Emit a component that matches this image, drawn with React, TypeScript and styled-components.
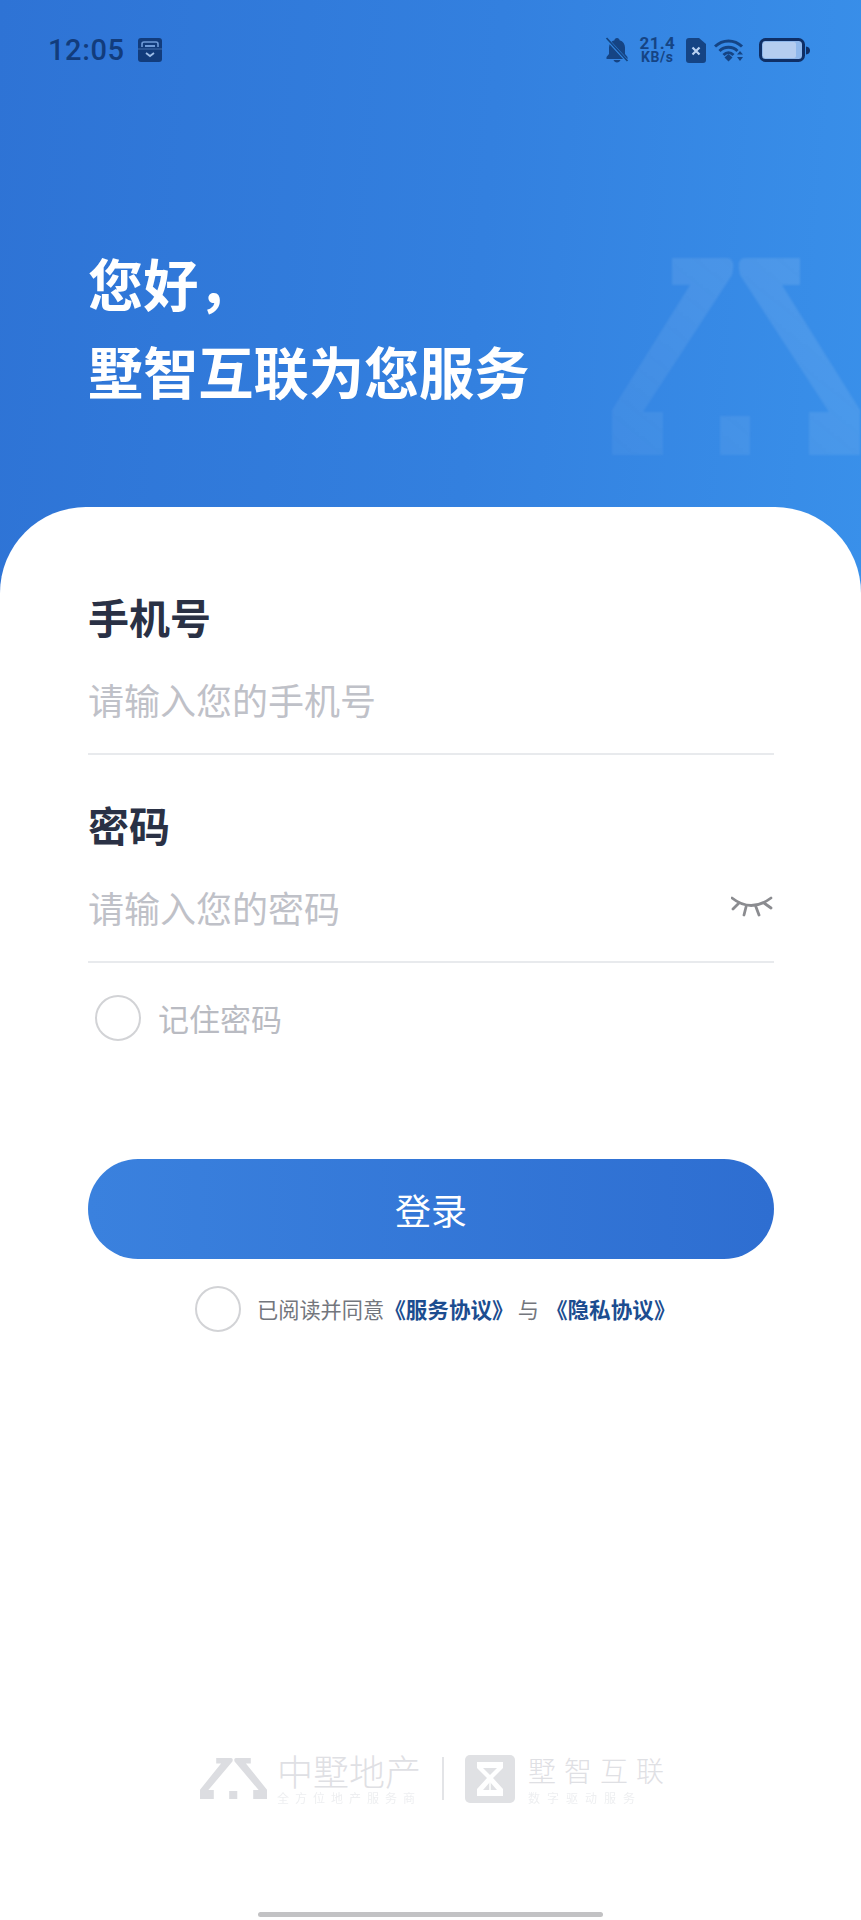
import { FC } from "react";
import styled, { createGlobalStyle } from "styled-components";

const CJK = `"Noto Sans CJK SC", "Noto Sans", sans-serif`;

const GlobalStyle = createGlobalStyle`
    html, body {
        margin: 0;
        padding: 0;
        background: #fff;
    }
    * {
        box-sizing: border-box;
    }
`;

const Page = styled.div`
    display: flex;
    flex-direction: column;
    width: 861px;
    height: 1920px;
    overflow: hidden;
    font-family: ${CJK};
    background: linear-gradient(95deg, #2e73d5 0%, #3380df 55%, #3990ea 100%) no-repeat;
    background-size: 861px 620px;
`;

const Hero = styled.header`
    position: relative;
    flex: none;
    height: 507px;
`;

const StatusBar = styled.div`
    display: flex;
    align-items: center;
    justify-content: space-between;
    height: 100px;
    padding: 0 51px 0 48px;
    color: #123c7c;
`;

const StatusGroup = styled.div`
    display: flex;
    align-items: center;
    gap: ${({ $gap }: { $gap: number }) => $gap}px;
`;

const WifiSlot = styled.span`
    display: flex;
    margin: 0 4px 0 -3px;
`;

const Clock = styled.span`
    font-family: Roboto, sans-serif;
    font-size: 29px;
    font-weight: 500;
    letter-spacing: 0.6px;
`;

const NetSpeed = styled.div`
    display: flex;
    flex-direction: column;
    align-items: center;
    font-family: Roboto, sans-serif;
    font-weight: 700;
    color: #154484;
`;

const NetValue = styled.span`
    font-size: 17px;
    line-height: 14px;
    letter-spacing: 0.3px;
`;

const NetUnit = styled.span`
    font-size: 14px;
    line-height: 14px;
    letter-spacing: 0.6px;
`;

const Greeting = styled.h1`
    margin: 0;
    padding: 138px 0 0 88px;
    font-size: 55.2px;
    font-weight: 700;
    line-height: 88px;
    color: #fff;
`;

const Watermark = styled.svg`
    position: absolute;
    left: 612px;
    top: 258px;
    filter: blur(0.8px);
`;

const Card = styled.main`
    display: flex;
    flex: 1;
    flex-direction: column;
    padding: 85px 87px 0 88px;
    background: #fff;
    border-radius: 86px 86px 0 0;
`;

const Field = styled.div`
    & + & {
        margin-top: 45px;
    }
`;

const FieldLabel = styled.label`
    display: block;
    font-size: 41px;
    font-weight: 700;
    line-height: 48px;
    color: #2a3145;
`;

const FieldRow = styled.div`
    display: flex;
    align-items: center;
    justify-content: space-between;
    height: 115px;
    padding: 5px 1px 0 0;
    border-bottom: 2px solid #e8eaed;
`;

const Placeholder = styled.span`
    font-size: 36px;
    line-height: 48px;
    color: #bfc1c8;
`;

const RememberRow = styled.div`
    display: flex;
    align-items: center;
    gap: 17px;
    margin: 32px 0 0 7px;
`;

const Radio = styled.span`
    flex: none;
    width: 46px;
    height: 46px;
    border: 2px solid #d2d3d6;
    border-radius: 50%;
    background: #fff;
`;

const RememberText = styled.span`
    font-size: 31px;
    line-height: 46px;
    color: #b9bbc2;
`;

const LoginButton = styled.button`
    display: block;
    width: 686px;
    height: 100px;
    margin-top: 118px;
    padding: 0;
    border: 0;
    border-radius: 50px;
    font-family: ${CJK};
    font-size: 36px;
    color: #fff;
    background: linear-gradient(90deg, #3a81de 0%, #2e6ed1 100%);
`;

const TermsRow = styled.div`
    display: flex;
    align-items: center;
    margin: 27px 0 0 107px;
`;

const TermsText = styled.span`
    margin-left: 16px;
    font-size: 21.2px;
    line-height: 46px;
    color: #73767d;
`;

const TermsLink = styled.span`
    font-size: 21.6px;
    font-weight: 700;
    color: #1c4d90;
`;

const TermsJoin = styled.span`
    margin: 0 7px 0 4px;
`;

const Footer = styled.footer`
    display: flex;
    align-items: center;
    margin: auto 0 0 112px;
    padding-bottom: 107px;
`;

const BrandMark = styled.svg`
    flex: none;
    margin-right: 13px;
`;

const HouseMark = styled.div`
    flex: none;
    display: flex;
    margin-right: 10px;
`;

const BrandText = styled.div`
    display: flex;
    flex-direction: column;
    gap: 3px;
    white-space: nowrap;
`;

const BrandName = styled.span`
    font-size: ${({ $size }: { $size: number; $spread: number }) => $size}px;
    font-weight: 300;
    line-height: 36px;
    letter-spacing: ${({ $spread }: { $size: number; $spread: number }) => $spread}px;
    color: #dfe0e4;
`;

const BrandSlogan = styled.span`
    font-size: 12px;
    line-height: 14px;
    letter-spacing: ${({ $spread }: { $spread: number }) => $spread}px;
    color: #eeeff1;
    filter: blur(0.6px);
`;

const BrandDivider = styled.span`
    flex: none;
    width: 2px;
    height: 43px;
    margin: 0 21px;
    background: #e3e4e7;
`;

const HomeBar = styled.div`
    flex: none;
    width: 345px;
    height: 5px;
    margin: 0 0 3px 170px;
    border-radius: 3px;
    background: #c2c2c4;
`;

const LOGO_ARMS =
    "M60 0H115Q124 0 120 17L31 154H51V197H0V152L78 27H60ZM188 0H133Q124 0 128 17L217 154H197V197H248V152L170 27H188ZM108 158H138V197H108Z";

const HouseLogo: FC<{ width: number; height: number; fill: string }> = ({ width, height, fill }) => (
    <svg width={width} height={height} viewBox="0 0 248 197" preserveAspectRatio="none">
        <path d={LOGO_ARMS} fill={fill} />
    </svg>
);

const InboxIcon: FC = () => (
    <svg width="24" height="24" viewBox="0 0 24 24">
        <rect width="24" height="24" rx="3" fill="#123c7c" />
        <path d="M4 9V6q0-2 2-2h12q2 0 2 2v3" fill="none" stroke="#6f9bd8" strokeWidth="1.6" />
        <rect x="7" y="7" width="10" height="2" fill="#6f9bd8" />
        <rect y="10.5" width="24" height="1" fill="#6f9bd8" opacity="0.5" />
        <path d="M8 15l4 3 4-3" fill="none" stroke="#9dbde8" strokeWidth="1.8" />
    </svg>
);

const BellOffIcon: FC = () => (
    <svg width="24" height="26" viewBox="0 0 24 26">
        <path
            d="M12 1c-1.500 0-2.500 1-2.500 2.200C5.800 4.200 4 7.200 4 10.500V17l-2.500 3v2h21v-2L20 17v-6.500c0-3.300-1.800-6.300-5.500-7.300C14.500 2 13.500 1 12 1zM8.500 23c.5 1.500 1.900 2.500 3.500 2.500s3-1 3.500-2.500z"
            fill="#154484"
        />
        <path d="M1 1l22 24" stroke="#3389e4" strokeWidth="3.200" />
        <path d="M1.500 1l21 23" stroke="#154484" strokeWidth="1.800" />
    </svg>
);

const SimIcon: FC = () => (
    <svg width="20" height="25" viewBox="0 0 20 25">
        <path d="M3 0H13L20 6V22q0 3-3 3H3q-3 0-3-3V3q0-3 3-3z" fill="#154484" />
        <path d="M6.500 9.500l7 7M13.500 9.500l-7 7" stroke="#b9d2f2" strokeWidth="2.200" />
    </svg>
);

const WifiIcon: FC = () => (
    <svg width="30" height="24" viewBox="0 0 30 24">
        <g fill="none" stroke="#154484" strokeWidth="3">
            <path d="M1 8.500C8.500 1 20.500 1 28 8.500" />
            <path d="M5.500 13C10.500 8 18.500 8 23.500 13" />
            <path d="M9.500 17C12.500 14 16.500 14 19.500 17" />
        </g>
        <path d="M10.500 19.500L14.500 16l4 3.500-4 4z" fill="#154484" />
        <path d="M23 16.500h6l-3-3.500zM23 19h6l-3 4z" fill="#154484" />
    </svg>
);

const BatteryIcon: FC = () => (
    <svg width="51" height="25" viewBox="0 0 51 25">
        <rect x="1.500" y="1.500" width="43" height="21" rx="5" fill="#8fb8ec" stroke="#0f2f66" strokeWidth="3" />
        <rect x="4" y="4" width="33" height="16" rx="2" fill="#b4cdf0" />
        <path d="M47 8.500q4 .5 4 4t-4 4z" fill="#0f2f66" />
    </svg>
);

const EyeClosedIcon: FC = () => (
    <svg width="42" height="22" viewBox="0 0 42 22">
        <path
            d="M1 2Q20 17 40 2M8 7L2 13M15 11L13 19M25 11L28 19M33 7L40 12"
            fill="none"
            stroke="#8b8c90"
            strokeWidth="2.800"
            strokeLinecap="round"
        />
    </svg>
);

const HourglassLogo: FC = () => (
    <BrandMark width="50" height="48" viewBox="0 0 50 48">
        <rect width="50" height="48" rx="5" fill="#e0e1e4" />
        <path d="M12 7H38V13L28 23 38 34V41H12V34L22 23 12 13Z" fill="#fff" />
        <path d="M18 13H32L25 20Z" fill="#e0e1e4" />
        <path d="M25 27L32 35H18Z" fill="#e0e1e4" />
        <path d="M25 27V41" stroke="#fff" strokeWidth="1.500" />
    </BrandMark>
);

const App: FC = () => (
    <>
        <GlobalStyle />
        <Page>
            <Hero>
                <StatusBar>
                    <StatusGroup $gap={13}>
                        <Clock>12:05</Clock>
                        <InboxIcon />
                    </StatusGroup>
                    <StatusGroup $gap={11}>
                        <BellOffIcon />
                        <NetSpeed>
                            <NetValue>21.4</NetValue>
                            <NetUnit>KB/s</NetUnit>
                        </NetSpeed>
                        <SimIcon />
                        <WifiSlot>
                            <WifiIcon />
                        </WifiSlot>
                        <BatteryIcon />
                    </StatusGroup>
                </StatusBar>
                <Greeting>
                    您好，
                    <br />
                    墅智互联为您服务
                </Greeting>
                <Watermark width="248" height="197" viewBox="0 0 248 197">
                    <defs>
                        <linearGradient id="watermarkFade" x1="1" y1="0" x2="0" y2="1">
                            <stop offset="0" stopColor="#fff" stopOpacity="0.12" />
                            <stop offset="1" stopColor="#fff" stopOpacity="0.05" />
                        </linearGradient>
                    </defs>
                    <path d={LOGO_ARMS} fill="url(#watermarkFade)" />
                </Watermark>
            </Hero>
            <Card>
                <Field>
                    <FieldLabel>手机号</FieldLabel>
                    <FieldRow>
                        <Placeholder>请输入您的手机号</Placeholder>
                    </FieldRow>
                </Field>
                <Field>
                    <FieldLabel>密码</FieldLabel>
                    <FieldRow>
                        <Placeholder>请输入您的密码</Placeholder>
                        <EyeClosedIcon />
                    </FieldRow>
                </Field>
                <RememberRow>
                    <Radio />
                    <RememberText>记住密码</RememberText>
                </RememberRow>
                <LoginButton>登录</LoginButton>
                <TermsRow>
                    <Radio />
                    <TermsText>
                        已阅读并同意<TermsLink>《服务协议》</TermsLink>
                        <TermsJoin>与</TermsJoin>
                        <TermsLink>《隐私协议》</TermsLink>
                    </TermsText>
                </TermsRow>
                <Footer>
                    <HouseMark>
                        <HouseLogo width={67} height={41} fill="#dcdde1" />
                    </HouseMark>
                    <BrandText>
                        <BrandName $size={36} $spread={0}>中墅地产</BrandName>
                        <BrandSlogan $spread={6}>全方位地产服务商</BrandSlogan>
                    </BrandText>
                    <BrandDivider />
                    <HourglassLogo />
                    <BrandText>
                        <BrandName $size={28} $spread={8}>墅智互联</BrandName>
                        <BrandSlogan $spread={7}>数字驱动服务</BrandSlogan>
                    </BrandText>
                </Footer>
                <HomeBar />
            </Card>
        </Page>
    </>
);

export default App;
